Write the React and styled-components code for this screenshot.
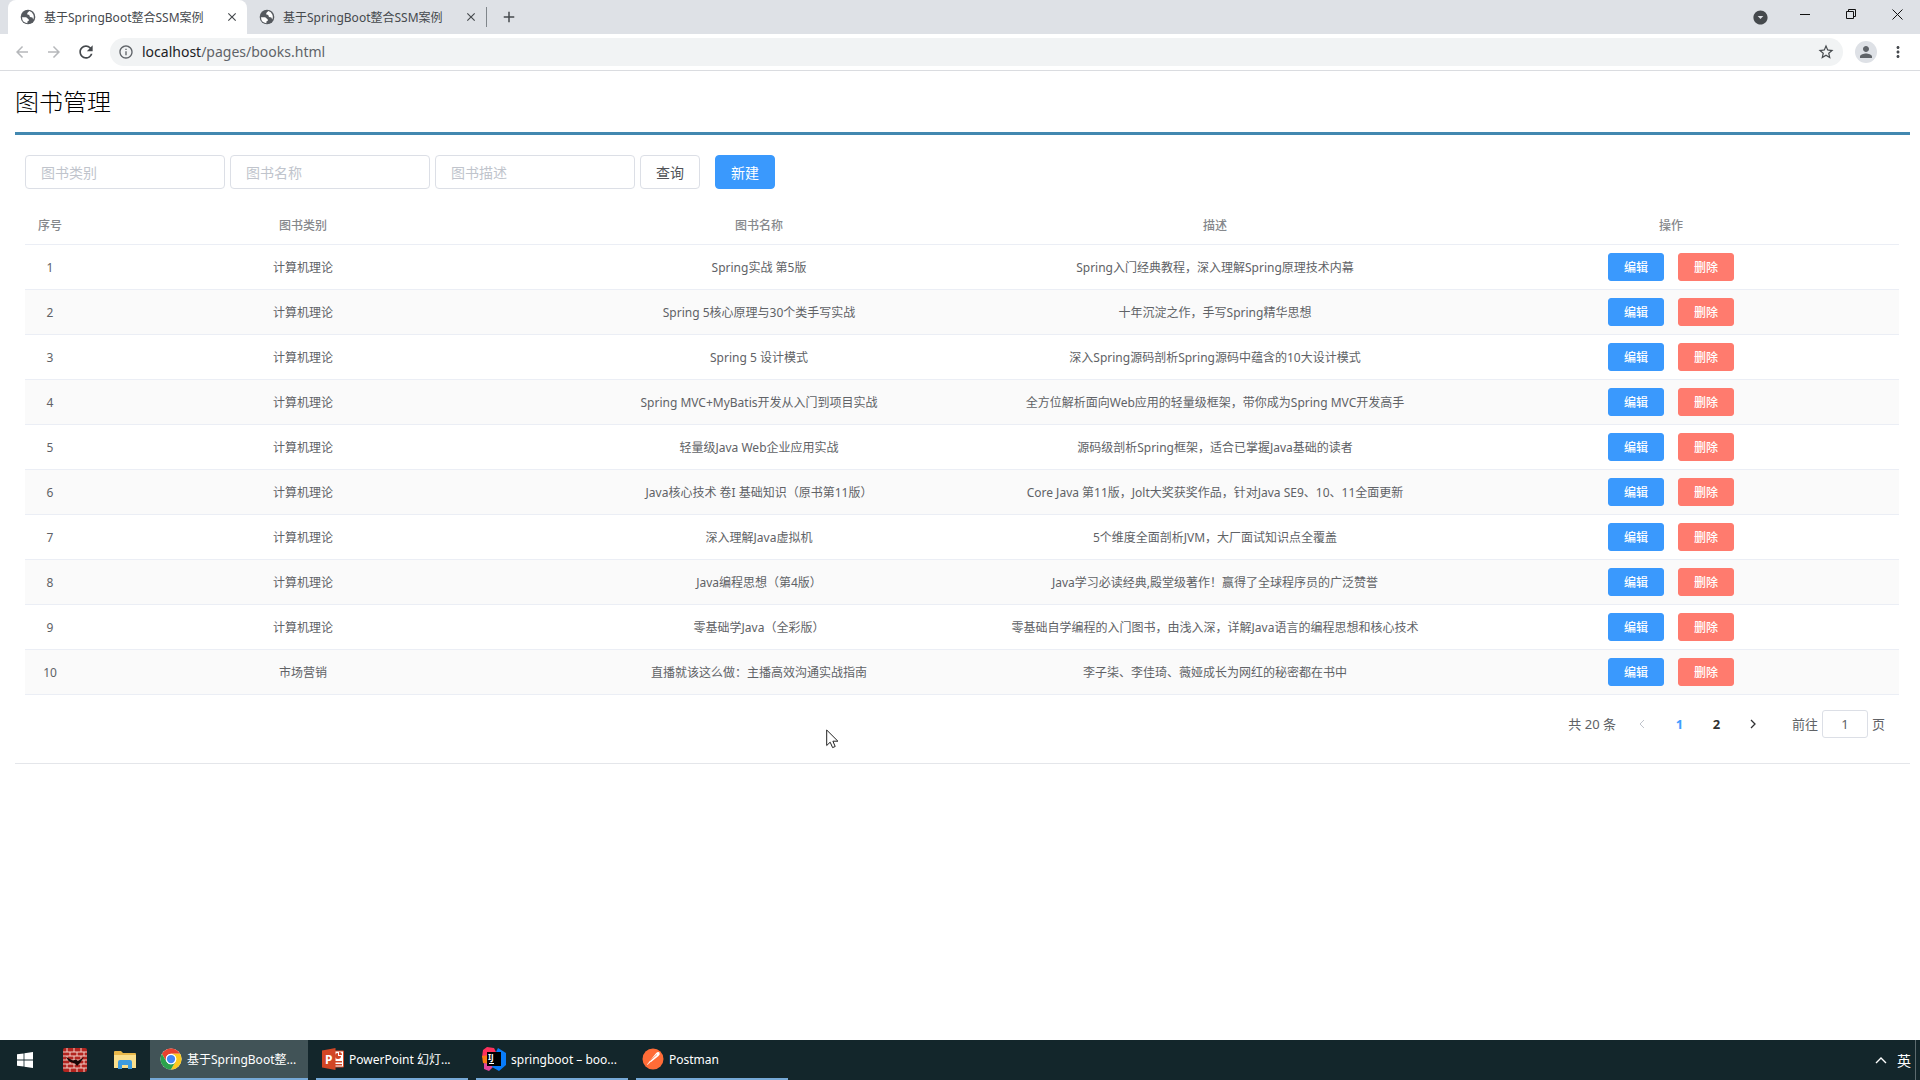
import React, { useState } from 'react'
import styled, { createGlobalStyle } from 'styled-components'
import {
    MdAdd,
    MdArrowBack,
    MdArrowDropDownCircle,
    MdArrowForward,
    MdClose,
    MdInfoOutline,
    MdMoreVert,
    MdPerson,
    MdRefresh,
    MdStarBorder,
} from 'react-icons/md'

const books = [
    ['计算机理论', 'Spring实战 第5版', 'Spring入门经典教程，深入理解Spring原理技术内幕'],
    ['计算机理论', 'Spring 5核心原理与30个类手写实战', '十年沉淀之作，手写Spring精华思想'],
    ['计算机理论', 'Spring 5 设计模式', '深入Spring源码剖析Spring源码中蕴含的10大设计模式'],
    ['计算机理论', 'Spring MVC+MyBatis开发从入门到项目实战', '全方位解析面向Web应用的轻量级框架，带你成为Spring MVC开发高手'],
    ['计算机理论', '轻量级Java Web企业应用实战', '源码级剖析Spring框架，适合已掌握Java基础的读者'],
    ['计算机理论', 'Java核心技术 卷I 基础知识（原书第11版）', 'Core Java 第11版，Jolt大奖获奖作品，针对Java SE9、10、11全面更新'],
    ['计算机理论', '深入理解Java虚拟机', '5个维度全面剖析JVM，大厂面试知识点全覆盖'],
    ['计算机理论', 'Java编程思想（第4版）', 'Java学习必读经典,殿堂级著作！赢得了全球程序员的广泛赞誉'],
    ['计算机理论', '零基础学Java（全彩版）', '零基础自学编程的入门图书，由浅入深，详解Java语言的编程思想和核心技术'],
    ['市场营销', '直播就该这么做：主播高效沟通实战指南', '李子柒、李佳琦、薇娅成长为网红的秘密都在书中'],
]

const tabs = ['基于SpringBoot整合SSM案例', '基于SpringBoot整合SSM案例']

function GlobeIcon() {
    return (
        <svg width="16" height="16" viewBox="0 0 16 16">
            <circle cx="8" cy="8" r="7.3" fill="#55595e" />
            <path d="M2 8.2H6.2L8.8 10.4V11.8L7.4 12.6V14.2A6.2 6.2 0 0 1 2 8.2z" fill="#fff" />
            <path d="M9.4 2Q7.2 3.6 7 5.2L9.2 6 10 8 12.4 8.4 13.2 10.6A6.2 6.2 0 0 0 9.4 2z" fill="#fff" />
        </svg>
    )
}

function WindowsIcon() {
    return (
        <svg width="16" height="16" viewBox="0 0 16 16" fill="#fff">
            <path d="M0 2.3 6.6 1.4V7.6H0zM7.4 1.3 16 0V7.6H7.4zM0 8.4H6.6V14.6L0 13.7zM7.4 8.4H16V16L7.4 14.7z" />
        </svg>
    )
}

function BrickIcon() {
    return (
        <svg width="24" height="24" viewBox="0 0 24 24">
            <rect width="24" height="24" rx="2" fill="#b3241f" />
            <path
                d="M0 4H24M0 8H24M0 12H24M0 16H24M0 20H24M4 0V4M11 0V4M18 0V4M7 4V8M14 4V8M21 4V8M4 8V12M11 8V12M18 8V12M7 12V16M14 12V16M21 12V16M4 16V20M11 16V20M18 16V20M7 20V24M14 20V24M21 20V24"
                stroke="#f0cfc8"
                strokeWidth="1"
            />
            <path
                d="M3 9 10 12.5 13 11.5 15 13 21 9 17 15 14 18 12 15.5 6 13.5z"
                fill="#170706"
            />
        </svg>
    )
}

function FolderIcon() {
    return (
        <svg width="22" height="20" viewBox="0 0 22 20">
            <path d="M0 2Q0 1 1 1H7L9 3H21Q22 3 22 4V17H0z" fill="#e9b84a" />
            <path d="M0 5H22V18H0z" fill="#fbdf8c" />
            <path d="M4 19V12Q4 10 6 10H16Q18 10 18 12V19H14V15H8V19z" fill="#3d9be0" />
        </svg>
    )
}

function ChromeIcon() {
    return (
        <svg width="22" height="22" viewBox="0 0 48 48">
            <circle cx="24" cy="24" r="23" fill="#fff" />
            <path d="M4.1 12.5A23 23 0 0 1 43.9 12.5H24A11.5 11.5 0 0 0 14 18.3L14 29.7z" fill="#e8412f" />
            <path d="M43.9 12.5A23 23 0 0 1 24 47L34 29.7A11.5 11.5 0 0 0 34 18.3L24 12.5z" fill="#fcc920" />
            <path d="M24 47A23 23 0 0 1 4.1 12.5L14 29.7A11.5 11.5 0 0 0 34 29.7z" fill="#2ba24c" />
            <circle cx="24" cy="24" r="11.5" fill="#fff" />
            <circle cx="24" cy="24" r="9" fill="#4285f4" />
        </svg>
    )
}

function PowerPointIcon() {
    return (
        <svg width="22" height="22" viewBox="0 0 22 22">
            <path d="M12 3H21.5V19H12z" fill="#fff" stroke="#d24625" strokeWidth="1" />
            <path d="M16 5A3 3 0 1 0 19 8H16zM17 4V7H20A3 3 0 0 0 17 4M13 13H20V14.5H13zM13 16H20V17.5H13z" fill="#d24625" />
            <path d="M0 2.5 13.5 0V22L0 19.5z" fill="#d24625" />
            <text x="3" y="15.5" fontSize="12" fontWeight="700" fill="#fff">
                P
            </text>
        </svg>
    )
}

function IdeaIcon() {
    return (
        <svg width="24" height="24" viewBox="0 0 24 24">
            <path d="M1 3 5 0 12 1 14 5 14 12 5 14 0 10z" fill="#fe315d" />
            <path d="M0 9 7 8 7 18 1 16z" fill="#f97a12" />
            <path d="M2 16 6 17 12 19 7 24 2 22z" fill="#e0459b" />
            <path d="M14 5 16 1 24 6 24 18 17 24 10 20z" fill="#087cfa" />
            <rect x="5" y="5" width="14" height="14" fill="#000" />
            <text x="6" y="13" fontSize="8" fontWeight="700" fill="#fff">
                IJ
            </text>
            <path d="M7 16H12V17H7z" fill="#fff" />
        </svg>
    )
}

function PostmanIcon() {
    return (
        <svg width="22" height="22" viewBox="0 0 22 22">
            <circle cx="11" cy="11" r="10.5" fill="#ff6c37" />
            <path d="M17.3 4.3Q18.6 6.2 16.5 8L9 14 5.5 17 5 16.4 8 12.8 14.2 5Q15.8 3.4 17.3 4.3z" fill="#fff" />
            <path d="M8 12.8 15 6.5M5.5 17 9 14" stroke="#ff6c37" strokeWidth="0.7" />
        </svg>
    )
}

const tasks = [
    { icon: <ChromeIcon />, text: '基于SpringBoot整...', active: true },
    { icon: <PowerPointIcon />, text: 'PowerPoint 幻灯...' },
    { icon: <IdeaIcon />, text: 'springboot – boo...' },
    { icon: <PostmanIcon />, text: 'Postman' },
]

function Browser() {
    return (
        <header>
            <TabStrip>
                {tabs.map((title, index) => (
                    <Tab key={index} $active={index === 0}>
                        <GlobeIcon />
                        <TabTitle>{title}</TabTitle>
                        <IconButton aria-label="关闭标签页" $size={16}>
                            <MdClose size={14} />
                        </IconButton>
                    </Tab>
                ))}
                <TabDivider />
                <IconButton aria-label="新标签页" $size={32}>
                    <MdAdd size={18} />
                </IconButton>
                <WindowButtons>
                    <IconButton aria-label="标签页搜索" $size={44}>
                        <MdArrowDropDownCircle size={17} />
                    </IconButton>
                    <WindowButton aria-label="最小化">
                        <svg width="10" height="10" stroke="#111" fill="none">
                            <path d="M0 5.5H10" />
                        </svg>
                    </WindowButton>
                    <WindowButton aria-label="还原">
                        <svg width="10" height="10" stroke="#111" fill="none">
                            <path d="M.5 2.5H7.5V9.5H.5zM2.5 2.5V.5H9.5V7.5H7.5" />
                        </svg>
                    </WindowButton>
                    <WindowButton aria-label="关闭">
                        <svg width="11" height="11" stroke="#111" fill="none">
                            <path d="M.5 .5 10.5 10.5M10.5 .5.5 10.5" />
                        </svg>
                    </WindowButton>
                </WindowButtons>
            </TabStrip>
            <Toolbar>
                <IconButton aria-label="后退" $size={32} disabled>
                    <MdArrowBack size={18} />
                </IconButton>
                <IconButton aria-label="前进" $size={32} disabled>
                    <MdArrowForward size={18} />
                </IconButton>
                <IconButton aria-label="刷新" $size={32}>
                    <MdRefresh size={20} />
                </IconButton>
                <AddressBar>
                    <MdInfoOutline size={16} />
                    <Address>
                        <b>localhost</b>/pages/books.html
                    </Address>
                    <IconButton aria-label="收藏" $size={24}>
                        <MdStarBorder size={18} />
                    </IconButton>
                </AddressBar>
                <Avatar aria-label="用户">
                    <MdPerson size={18} />
                </Avatar>
                <IconButton aria-label="菜单" $size={24}>
                    <MdMoreVert size={18} />
                </IconButton>
            </Toolbar>
        </header>
    )
}

function Pager() {
    const [page, setPage] = useState('1')

    return (
        <Pagination aria-label="分页">
            <Total>共 20 条</Total>
            <PageButton aria-label="上一页" disabled>
                <svg width="6" height="10" fill="none" stroke="currentColor">
                    <path d="M5 1 1 5 5 9" />
                </svg>
            </PageButton>
            <PageButton $current={page === '1'} onClick={() => setPage('1')}>
                1
            </PageButton>
            <PageButton $current={page === '2'} onClick={() => setPage('2')}>
                2
            </PageButton>
            <PageButton aria-label="下一页" onClick={() => setPage('2')}>
                <svg width="6" height="10" fill="none" stroke="currentColor" strokeWidth="1.3">
                    <path d="M1 1 5 5 1 9" />
                </svg>
            </PageButton>
            <Jump>
                前往
                <input value={page} onChange={(e) => setPage(e.target.value)} />页
            </Jump>
        </Pagination>
    )
}

function Books() {
    return (
        <Content>
            <Title>图书管理</Title>
            <Box>
                <Filter onSubmit={(e) => e.preventDefault()}>
                    <FilterInput aria-label="图书类别" placeholder="图书类别" />
                    <FilterInput aria-label="图书名称" placeholder="图书名称" />
                    <FilterInput aria-label="图书描述" placeholder="图书描述" />
                    <Button type="submit">查询</Button>
                    <CreateButton type="button" $kind="primary">
                        新建
                    </CreateButton>
                </Filter>
                <Table>
                    <colgroup>
                        <col className="index" />
                    </colgroup>
                    <thead>
                        <tr>
                            <th>序号</th>
                            <th>图书类别</th>
                            <th>图书名称</th>
                            <th>描述</th>
                            <th>操作</th>
                        </tr>
                    </thead>
                    <tbody>
                        {books.map(([type, name, description], index) => (
                            <tr key={name}>
                                <td>{index + 1}</td>
                                <td>{type}</td>
                                <td>{name}</td>
                                <td>{description}</td>
                                <td>
                                    <Actions>
                                        <MiniButton $kind="primary">编辑</MiniButton>
                                        <MiniButton $kind="danger">删除</MiniButton>
                                    </Actions>
                                </td>
                            </tr>
                        ))}
                    </tbody>
                </Table>
                <Pager />
            </Box>
        </Content>
    )
}

function App() {
    return (
        <>
            <GlobalStyle />
            <Screen>
                <Browser />
                <Books />
                <Taskbar>
                    <Launcher aria-label="开始">
                        <WindowsIcon />
                    </Launcher>
                    <Launcher aria-label="防火墙">
                        <BrickIcon />
                    </Launcher>
                    <Launcher aria-label="文件资源管理器">
                        <FolderIcon />
                    </Launcher>
                    <Tasks>
                        {tasks.map((task) => (
                            <Task key={task.text} $active={task.active}>
                                {task.icon}
                                <span>{task.text}</span>
                            </Task>
                        ))}
                    </Tasks>
                    <Tray>
                        <svg width="12" height="8" fill="none" stroke="#fff" strokeWidth="1.4">
                            <path d="M1 7 6 2 11 7" />
                        </svg>
                        <span>英</span>
                    </Tray>
                </Taskbar>
                <Cursor width="14" height="20" viewBox="0 0 14 20">
                    <path
                        d="M.7 1V16.5L4.2 13.2 6.6 18.6 9.2 17.5 6.9 12.2H11.9z"
                        fill="#fff"
                        stroke="#222"
                    />
                </Cursor>
            </Screen>
        </>
    )
}

const GlobalStyle = createGlobalStyle`
    * {
        box-sizing: border-box;
    }
    body {
        margin: 0;
        background-color: #fff;
    }
    body,
    button,
    input {
        font-family: 'Noto Sans', 'Noto Sans CJK SC', sans-serif;
        font-size: 12px;
    }
    button {
        padding: 0;
        border: none;
        background: none;
        cursor: pointer;
    }
    svg {
        display: block;
        flex-shrink: 0;
    }
`

const Screen = styled.div`
    display: flex;
    flex-direction: column;
    min-height: 100vh;
`

const TabStrip = styled.div`
    display: flex;
    align-items: center;
    height: 34px;
    padding-left: 8px;
    background-color: #dee1e6;
`

const Tab = styled.div`
    display: flex;
    align-items: center;
    width: 239px;
    height: 34px;
    padding: 0 7px 0 12px;
    border-radius: 8px 8px 0 0;
    color: #45494d;
    background-color: ${(props) => (props.$active ? '#fff' : 'transparent')};
`

const TabTitle = styled.span`
    flex: 1;
    margin-left: 8px;
    padding-top: 1px;
    line-height: 20px;
    white-space: nowrap;
`

const TabDivider = styled.span`
    width: 1px;
    height: 20px;
    margin-right: 6px;
    background-color: #80868b;
`

const IconButton = styled.button`
    display: flex;
    align-items: center;
    justify-content: center;
    flex-shrink: 0;
    width: ${(props) => props.$size}px;
    height: 24px;
    color: #45494d;
    &:disabled {
        color: #b6b8bb;
    }
`

const WindowButtons = styled.div`
    display: flex;
    align-items: center;
    margin-left: auto;
`

const WindowButton = styled.button`
    display: flex;
    justify-content: center;
    align-items: center;
    width: 46px;
    height: 28px;
    margin-bottom: 6px;
`

const Toolbar = styled.div`
    display: flex;
    align-items: center;
    height: 37px;
    padding: 0 10px 0 6px;
    border-bottom: 1px solid #dadce0;
`

const AddressBar = styled.div`
    display: flex;
    align-items: center;
    flex: 1;
    height: 28px;
    margin: 0 12px 0 8px;
    padding: 0 5px 0 8px;
    border-radius: 14px;
    background-color: #f1f3f4;
    color: #5f6368;
`

const Address = styled.span`
    flex: 1;
    margin-left: 8px;
    font-size: 14px;
    line-height: 20px;
    b {
        font-weight: 400;
        color: #202124;
    }
`

const Avatar = styled.button`
    display: flex;
    align-items: center;
    justify-content: center;
    width: 22px;
    height: 22px;
    margin-right: 9px;
    border-radius: 50%;
    background-color: #dee1e6;
    color: #5f6368;
`

const Content = styled.main`
    flex: 1;
    padding: 0 10px 0 15px;
`

const Title = styled.h1`
    margin: 0;
    padding: 15px 0 14px;
    border-bottom: 3px solid #4288b0;
    font-size: 24px;
    font-weight: 300;
    line-height: 32px;
    color: #000;
`

const Box = styled.section`
    padding: 20px 11px 25px 10px;
    border-bottom: 1px solid #e4e6ea;
`

const Filter = styled.form`
    display: flex;
    align-items: center;
    gap: 5px;
`

const FilterInput = styled.input`
    width: 200px;
    height: 34px;
    padding: 0 15px;
    border: 1px solid #dcdfe6;
    border-radius: 4px;
    outline: none;
    font-size: 14px;
    color: #606266;
    &::placeholder {
        color: #c0c4cc;
    }
    &:focus {
        border-color: #409eff;
    }
`

const colors = {
    primary: '#3a99fd',
    danger: '#ff7b6e',
}

const Button = styled.button`
    width: 60px;
    height: 34px;
    border: 1px solid ${(props) => colors[props.$kind] || '#dcdfe6'};
    border-radius: 4px;
    background-color: ${(props) => colors[props.$kind] || '#fff'};
    color: ${(props) => (props.$kind ? '#fff' : '#505256')};
    font-size: 14px;
`

const CreateButton = styled(Button)`
    margin-left: 10px;
`

const MiniButton = styled(Button)`
    width: 56px;
    height: 28px;
    border-radius: 3px;
    font-size: 12px;
    font-weight: 500;
`

const Table = styled.table`
    width: 100%;
    margin-top: 16px;
    table-layout: fixed;
    border-collapse: separate;
    border-spacing: 0;
    text-align: center;
    color: #606266;
    .index {
        width: 50px;
    }
    th,
    td {
        height: 45px;
        padding: 2px 0 0;
        border-bottom: 1px solid #ebeef5;
        line-height: 20px;
    }
    td:last-child {
        padding: 0;
    }
    th {
        height: 40px;
        font-weight: 500;
        color: #86888c;
    }
    tbody tr:nth-child(even) {
        background-color: #fafafa;
    }
`

const Actions = styled.div`
    display: flex;
    justify-content: center;
    gap: 14px;
`

const Pagination = styled.nav`
    display: flex;
    align-items: center;
    justify-content: flex-end;
    height: 28px;
    margin-top: 15px;
    padding-right: 14px;
    color: #606266;
    font-size: 13px;
    line-height: 28px;
`

const Total = styled.span`
    margin-right: 8px;
`

const PageButton = styled.button`
    display: flex;
    align-items: center;
    justify-content: center;
    width: 37px;
    height: 28px;
    font-size: 13px;
    font-weight: 700;
    color: ${(props) => (props.$current ? '#409eff' : '#303133')};
    &:disabled {
        color: #c0c4cc;
    }
`

const Jump = styled.label`
    display: flex;
    gap: 4px;
    margin-left: 20px;
    input {
        width: 46px;
        height: 28px;
        padding: 0;
        border: 1px solid #dcdfe6;
        border-radius: 3px;
        outline: none;
        text-align: center;
        font-size: 13px;
        color: #606266;
    }
`

const Taskbar = styled.footer`
    display: flex;
    height: 40px;
    background-color: #13262b;
    color: #fff;
`

const Launcher = styled.button`
    display: flex;
    align-items: center;
    justify-content: center;
    width: 50px;
`

const Tasks = styled.div`
    display: flex;
    flex: 1;
    gap: 8px;
`

const Task = styled.button`
    display: flex;
    align-items: center;
    gap: 5px;
    width: ${(props) => (props.$active ? 158 : 152)}px;
    padding: 0 0 0 ${(props) => (props.$active ? 10 : 6)}px;
    border-bottom: 2px solid #76a9d6;
    background-color: ${(props) => (props.$active ? '#415357' : 'transparent')};
    color: #fff;
    white-space: nowrap;
`

const Tray = styled.div`
    display: flex;
    align-items: center;
    gap: 10px;
    margin-right: 4px;
    padding-right: 4px;
    border-right: 1px solid #5c6a6e;
    font-size: 14px;
`

const Cursor = styled.svg`
    position: absolute;
    top: 729px;
    left: 826px;
    pointer-events: none;
`

export default App
